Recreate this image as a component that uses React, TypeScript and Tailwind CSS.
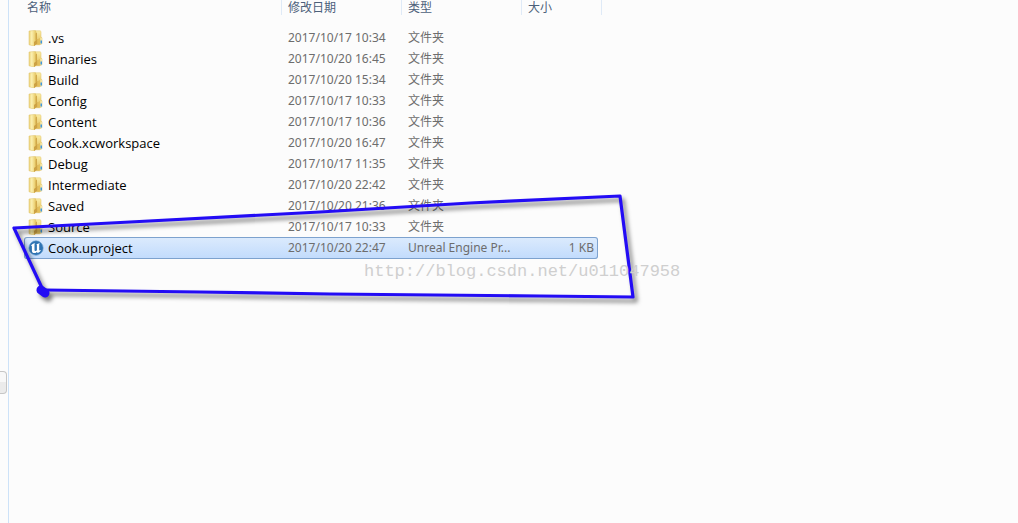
import React, { useState } from 'react';

interface FileEntry {
  name: string;
  modified: string;
  type: string;
  size?: string;
}

const FOLDER = '文件夹';

const entries: FileEntry[] = [
  { name: '.vs', modified: '2017/10/17 10:34', type: FOLDER },
  { name: 'Binaries', modified: '2017/10/20 16:45', type: FOLDER },
  { name: 'Build', modified: '2017/10/20 15:34', type: FOLDER },
  { name: 'Config', modified: '2017/10/17 10:33', type: FOLDER },
  { name: 'Content', modified: '2017/10/17 10:36', type: FOLDER },
  { name: 'Cook.xcworkspace', modified: '2017/10/20 16:47', type: FOLDER },
  { name: 'Debug', modified: '2017/10/17 11:35', type: FOLDER },
  { name: 'Intermediate', modified: '2017/10/20 22:42', type: FOLDER },
  { name: 'Saved', modified: '2017/10/20 21:36', type: FOLDER },
  { name: 'Source', modified: '2017/10/17 10:33', type: FOLDER },
  { name: 'Cook.uproject', modified: '2017/10/20 22:47', type: 'Unreal Engine Pr...', size: '1 KB' }
];

const headers = ['名称', '修改日期', '类型', '大小'];

const FolderIcon: React.FC = () => (
  <svg viewBox="0 0 16 16" className="w-4 h-4 shrink-0" aria-hidden="true">
    <defs>
      <linearGradient id="folderLeft" x1="0" x2="1" y1="0" y2="0">
        <stop offset="0" stopColor="#ecd27c" />
        <stop offset="0.4" stopColor="#fbf0b0" />
        <stop offset="1" stopColor="#e8c864" />
      </linearGradient>
      <linearGradient id="folderRight" x1="0" x2="0" y1="0" y2="1">
        <stop offset="0" stopColor="#fbeea6" />
        <stop offset="1" stopColor="#dfb954" />
      </linearGradient>
    </defs>
    <path d="M7 .8h5.200l.8.700V7l1 .8v6l-2.500 1H7z" fill="url(#folderRight)" stroke="#e0c264" strokeWidth="0.5" />
    <path d="M1 1l6-.6.700.600v13.500L6 16l-5-1.200z" fill="url(#folderLeft)" stroke="#dfc062" strokeWidth="0.5" />
    <path d="M7.700 3.500l1.200-1.200v7.200L6 12v4l3.500-2.500V9l-1.800 1z" fill="#cda244" />
    <path d="M9.500 9.500L12 8v6l-2.500.8z" fill="#e3bf5c" />
    <path d="M12.300 8H14v5.800l-1.700.4z" fill="#f3e4a4" />
    <path d="M12.500 10.500H14v3h-1.500z" fill="#3f97e0" />
  </svg>
);

const UnrealIcon: React.FC = () => (
  <svg viewBox="0 0 16 16" className="w-4 h-4 shrink-0" aria-hidden="true">
    <circle cx="8" cy="8" r="7.200" fill="#2f74b3" stroke="#6a9fcf" strokeWidth="0.6" />
    <path
      d="M2.800 5.900C3.600 4.300 5.200 3.500 7.200 3.200 6.700 3.600 6.500 4.100 6.500 4.800v5.100c0 .8.400 1.200 1.100 1.100.600-.1 1-.4 1.300-.8V5.100c0-.6-.2-.8-.8-.9 1.400-.1 2.500-.5 3.700-1.200-.5.700-.6 1.100-.6 1.900v4.900c0 .8.500.9 2 .2-1 1.700-2.200 2.500-3.400 3.100l-1-1.100c-.8.9-1.600 1.100-2.500 1.100-1.500 0-2.400-.9-2.400-2.400V6.400c0-.7-.4-.8-1.100-.5z"
      fill="#ffffff"
    />
  </svg>
);

// Hand drawn frame around the project file
const Annotation: React.FC = () => (
  <svg
    viewBox="0 0 660 320"
    className="absolute left-0 top-0 w-[660px] h-[320px] pointer-events-none drop-shadow-[3px_4px_2px_rgba(0,0,0,0.5)]"
    aria-hidden="true"
  >
    <g fill="none" stroke="#230cf5" strokeLinecap="round" strokeLinejoin="round">
      <path d="M43 290L14 228 130 222 320 212 470 203 620 196 633 297 540 296 330 294 200 292 45 290" strokeWidth="3.200" />
      <path d="M41 290L45 293" strokeWidth="9" />
    </g>
  </svg>
);

const App: React.FC = () => {
  const [selected, setSelected] = useState('Cook.uproject');

  return (
    <div className="relative flex min-h-screen overflow-hidden bg-[#fcfcfc] font-['Noto_Sans','Noto_Sans_CJK_SC',sans-serif] text-xs text-[#6d6d6d]">
      <aside className="w-2 shrink-0 pt-[371px]">
        <button
          aria-label="Navigation pane"
          className="block w-[7px] h-[23px] rounded-r-sm border border-l-0 border-[#c6c6c6] bg-linear-to-b from-[#f8f8f8] from-50% to-[#ebebeb] to-50%"
        />
      </aside>

      <main className="flex-1 border-l border-[#cde2f8] pl-[15px]">
        <table className="block">
          <thead className="block">
            <tr className="grid h-[15px] w-[578px] grid-cols-[258px_120px_120px_80px]">
              {headers.map((header, index) => (
                <th
                  key={header}
                  scope="col"
                  className={`border-r border-[#dfeaf7] text-left font-normal leading-[15px] text-[#4c607a] ${
                    index === 0 ? 'pl-[3px]' : 'pl-[6px]'
                  }`}
                >
                  {header}
                </th>
              ))}
            </tr>
          </thead>
          <tbody className="block pt-3">
            {entries.map((entry) => (
              <tr
                key={entry.name}
                onClick={() => setSelected(entry.name)}
                className={`grid w-[574px] grid-cols-[258px_120px_120px_76px] items-center whitespace-nowrap ${
                  entry.name === selected
                    ? 'h-[22px] rounded-[3px] bg-linear-to-b from-[#dcebfd] to-[#c1dbfc] inset-ring inset-ring-[#7da2ce]'
                    : 'h-[21px]'
                }`}
              >
                <td className="flex items-center gap-1 pl-1 font-['Open_Sans',sans-serif] text-[13px] leading-5 text-black">
                  {entry.type === FOLDER ? <FolderIcon /> : <UnrealIcon />}
                  <span>{entry.name}</span>
                </td>
                <td className="pl-[6px]">{entry.modified}</td>
                <td className="pl-[6px]">{entry.type}</td>
                <td className="pr-1 text-right">{entry.size}</td>
              </tr>
            ))}
          </tbody>
        </table>
      </main>

      <Annotation />
      <p className="absolute left-[364px] top-[260px] font-['Liberation_Mono',monospace] text-[17px] leading-6 text-[#cfcfcf]">
        http://blog.csdn.net/u011047958
      </p>
    </div>
  );
};

export default App;
